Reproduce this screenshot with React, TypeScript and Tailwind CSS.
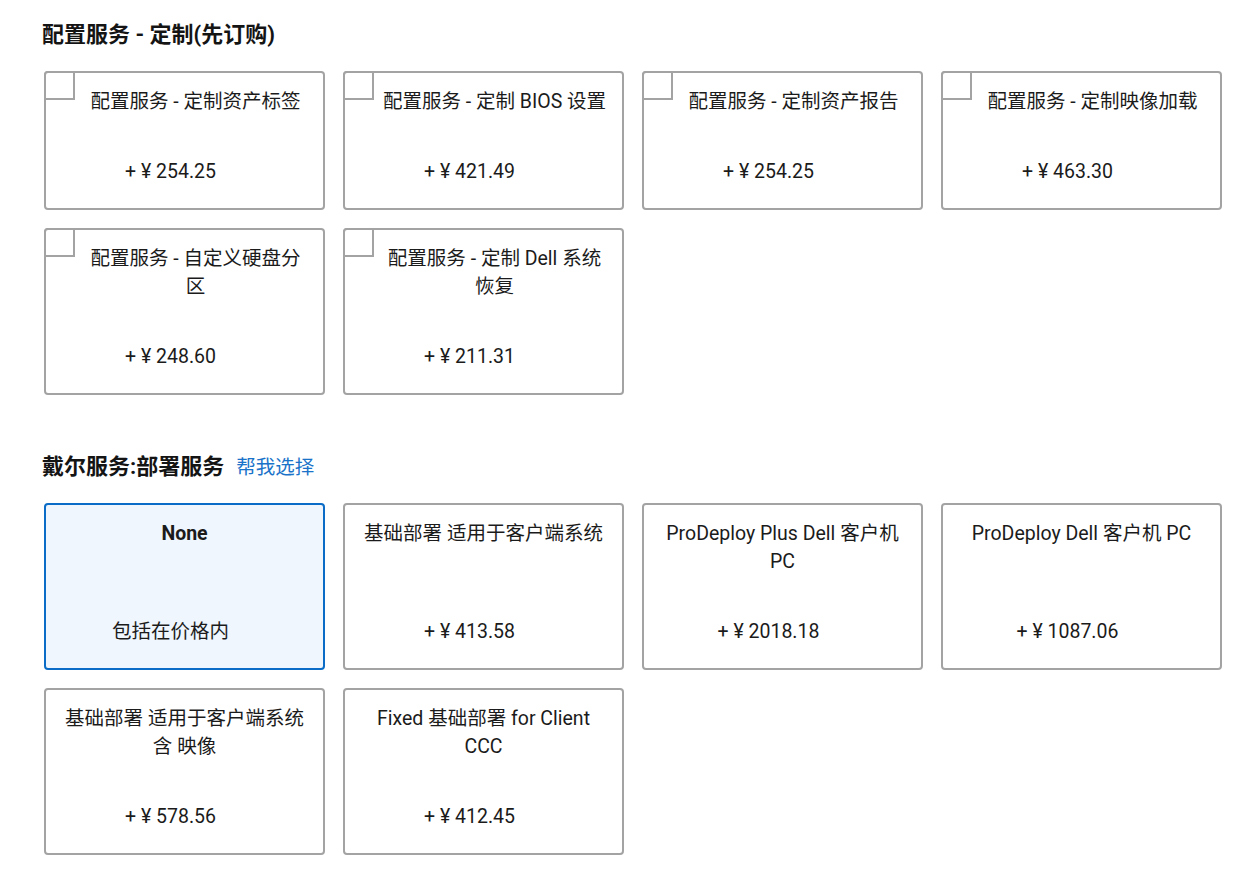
import React from "react";

type Item = { title: string; price: string; selected?: boolean; bold?: boolean };

const sec1: Item[] = [
  { title: "配置服务 - 定制资产标签", price: "+ ¥ 254.25" },
  { title: "配置服务 - 定制 BIOS 设置", price: "+ ¥ 421.49" },
  { title: "配置服务 - 定制资产报告", price: "+ ¥ 254.25" },
  { title: "配置服务 - 定制映像加载", price: "+ ¥ 463.30" },
  { title: "配置服务 - 自定义硬盘分区", price: "+ ¥ 248.60" },
  { title: "配置服务 - 定制 Dell 系统恢复", price: "+ ¥ 211.31" },
];

const sec2: Item[] = [
  { title: "None", price: "包括在价格内", selected: true, bold: true },
  { title: "基础部署 适用于客户端系统", price: "+ ¥ 413.58" },
  { title: "ProDeploy Plus Dell 客户机 PC", price: "+ ¥ 2018.18" },
  { title: "ProDeploy Dell 客户机 PC", price: "+ ¥ 1087.06" },
  { title: "基础部署 适用于客户端系统 含 映像", price: "+ ¥ 578.56" },
  { title: "Fixed 基础部署 for Client CCC", price: "+ ¥ 412.45" },
];

function Card({ item, checkbox }: { item: Item; checkbox: boolean }) {
  return (
    <div
      className={
        "relative flex flex-col rounded-[4px] border-2 pt-[15px] pb-[22px] " +
        (item.selected ? "border-[#0a6cc6] bg-[#eff6fd]" : "border-[#a3a3a3] bg-white")
      }
    >
      {checkbox && (
        <div className="absolute left-[-2px] top-[-2px] h-[29px] w-[31px] rounded-tl-[4px] border-2 border-[#a3a3a3] bg-white" />
      )}
      <div
        className={
          "text-center text-[19.5px] leading-[28px] text-[#1b1b1b] " +
          (checkbox ? "pl-[37px] pr-[15px] " : "px-[14px] ") +
          (item.bold ? "font-bold" : "")
        }
      >
        {item.title}
      </div>
      <div className="mt-auto pt-[42px] pl-[14px] pr-[42px] text-center text-[19.5px] leading-[28px] text-[#1b1b1b]">
        {item.price}
      </div>
    </div>
  );
}

export default function App() {
  return (
    <div
      className="min-h-[888px] bg-white pl-[44px] pr-[25px] pt-[19px] pb-[30px]"
      style={{ fontFamily: 'Roboto, "Noto Sans CJK SC", sans-serif' }}
    >
      <h2 className="ml-[-2px] mb-[20px] text-[22px] font-bold leading-[32px] text-[#141414]">
        配置服务 - 定制(先订购)
      </h2>
      <div className="grid grid-cols-4 gap-[18px]">
        {sec1.map((it, i) => (
          <Card key={i} item={it} checkbox />
        ))}
      </div>
      <div className="mt-[56px] mb-[20px] ml-[-2px] flex items-baseline gap-[12px]">
        <h2 className="text-[22px] font-bold leading-[32px] text-[#141414]">戴尔服务:部署服务</h2>
        <a className="text-[19.5px] text-[#1a73c9]" href="#">
          帮我选择
        </a>
      </div>
      <div className="grid grid-cols-4 gap-[18px]">
        {sec2.map((it, i) => (
          <Card key={i} item={it} checkbox={false} />
        ))}
      </div>
    </div>
  );
}
